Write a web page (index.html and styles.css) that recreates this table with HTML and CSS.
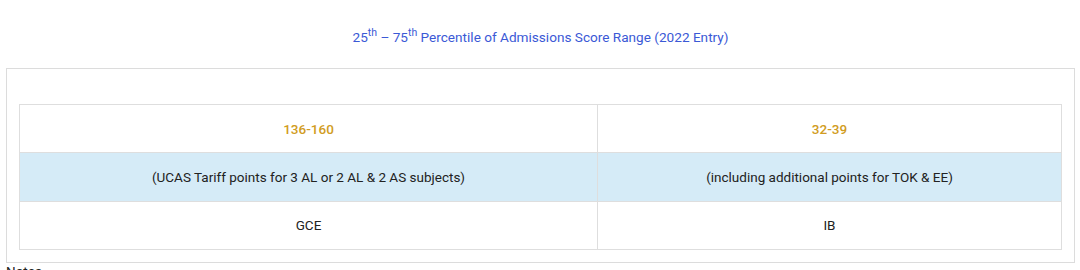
FILE: index.html
```html
<!DOCTYPE html>
<html>
<head>
<meta charset="utf-8">
<link rel="stylesheet" href="styles.css">
</head>
<body>
<div class="page">
  <h3 class="title">25<sup>th</sup> – 75<sup>th</sup> Percentile of Admissions Score Range (2022 Entry)</h3>
  <div class="box">
    <table class="scores">
      <tr>
        <td class="col-a score">136-160</td>
        <td class="score">32-39</td>
      </tr>
      <tr class="shaded">
        <td class="col-a">(UCAS Tariff points for 3 AL or 2 AL &amp; 2 AS subjects)</td>
        <td>(including additional points for TOK &amp; EE)</td>
      </tr>
      <tr>
        <td class="col-a">GCE</td>
        <td>IB</td>
      </tr>
    </table>
  </div>
  <p class="notes">Notes</p>
</div>
</body>
</html>
```
FILE: styles.css
```css
html, body {
  margin: 0;
  padding: 0;
  background: #ffffff;
}
body {
  font-family: Roboto, "Liberation Sans", Arial, sans-serif;
  color: #222222;
}
.page {
  padding: 0 5px 0 6px;
}
.title {
  margin: 0;
  padding: 29px 0 0;
  height: 50px;
  box-sizing: border-box;
  text-align: center;
  font-size: 13.6px;
  font-weight: 400;
  color: #3b59d6;
}
.title sup {
  font-size: 10.5px;
  line-height: 0;
  vertical-align: 6px;
}
.box {
  margin-top: 18px;
  border: 1px solid #dcdcdc;
  padding: 35px 12px 12px 12px;
}
.scores {
  width: 100%;
  border-collapse: collapse;
  font-size: 13.5px;
}
.scores td {
  border: 1px solid #dedede;
  height: 48.4px;
  padding: 0 8px;
  text-align: center;
  vertical-align: middle;
  box-sizing: border-box;
}
.scores .col-a {
  width: 578px;
}
.scores .score {
  color: #d19c22;
  font-weight: 500;
}
.shaded td {
  background: #d5ebf7;
}
.notes {
  margin: 0;
  font-size: 13.5px;
  line-height: 16px;
  color: #222222;
}
```
